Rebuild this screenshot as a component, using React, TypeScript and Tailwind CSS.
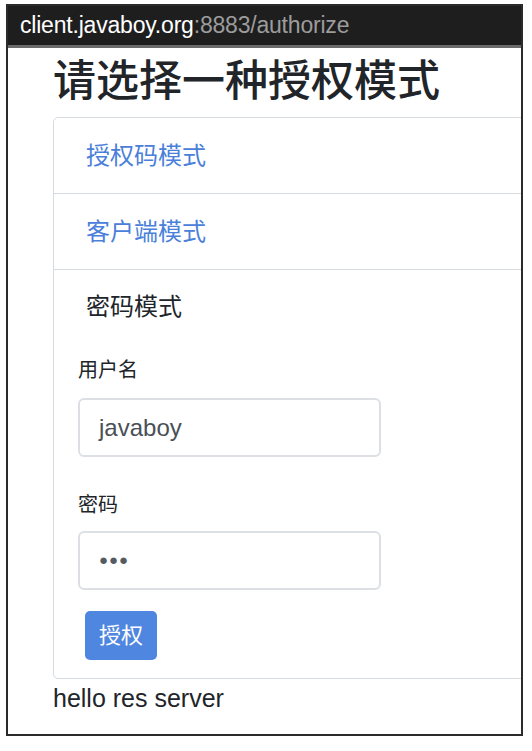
const font = "font-['Liberation_Sans','Noto_Sans_CJK_SC',sans-serif]";

function Field({ label, value, top, valueClass }: { label: string; value: string; top: string; valueClass: string }) {
  return (
    <div className="flex flex-col">
      <label className="text-[20px] leading-[30px] text-[#212529]">{label}</label>
      <div
        className={`flex items-center w-[303px] h-[59px] border-2 border-[#dcdfe4] rounded-[6px] px-[19px] text-[#495057] ${top}`}
      >
        <span className={valueClass}>{value}</span>
      </div>
    </div>
  );
}

export default function App() {
  return (
    <div className={`w-[532px] h-[751px] bg-white pt-[4px] pl-[6px] ${font}`}>
      <div className="w-[517px] h-[732px] border-2 border-[#2b2b2b] overflow-hidden flex flex-col bg-white">
        {/* Address bar */}
        <div className="h-[39px] bg-[#1e1e1f] flex items-center pl-[12px] text-[23px] tracking-[-0.2px]">
          <span className="text-white">client.javaboy.org</span>
          <span className="text-[#9c9c9c]">:8883/authorize</span>
        </div>
        <div className="h-[3px] bg-[#6a6a6a]" />

        <div className="pl-[45px]">
          <h1 className="mt-[7px] mb-[10px] text-[43px] leading-[52px] font-medium text-[#212529]">
            请选择一种授权模式
          </h1>

          {/* Accordion card */}
          <div className="w-[490px] border border-[#d6dbe1] rounded-[5px]">
            <div className="h-[76px] flex items-center pl-[32px] text-[24px] text-[#4a80da] border-b border-[#d6dbe1]">
              授权码模式
            </div>
            <div className="h-[76px] flex items-center pl-[32px] text-[24px] text-[#4a80da] border-b border-[#d6dbe1]">
              客户端模式
            </div>
            <div className="pt-[19px] pb-[18px]">
              <div className="pl-[32px] text-[24px] leading-[36px] text-[#212529]">密码模式</div>
              <div className="pl-[24px] mt-[30px] flex flex-col">
                <Field label="用户名" value="javaboy" top="mt-[13px]" valueClass="text-[24px]" />
                <div className="mt-[33px]">
                  <Field label="密码" value="●●●" top="mt-[11px]" valueClass="text-[15px] tracking-[1px] text-[#555b61]" />
                </div>
                <button className="mt-[21px] ml-[7px] self-start h-[49px] px-[14px] rounded-[5px] bg-[#4f86e0] text-white text-[22px]">
                  授权
                </button>
              </div>
            </div>
          </div>

          <p className="text-[25px] leading-[38px] text-[#212529]">hello res server</p>
        </div>
      </div>
    </div>
  );
}
